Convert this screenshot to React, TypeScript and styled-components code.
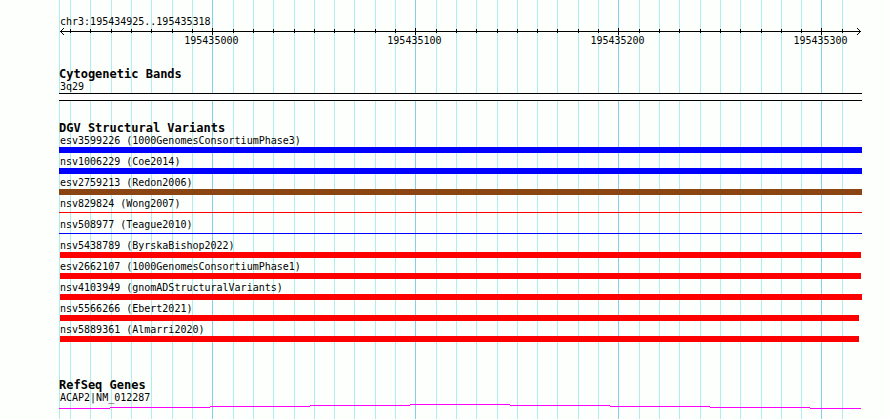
import * as React from "react";
import { FC } from "react";
import styled, { createGlobalStyle } from "styled-components";

const REGION_START = 195434925;
const REGION_END = 195435318;
const REGION_LENGTH = REGION_END - REGION_START + 1;

const GlobalStyle = createGlobalStyle`
  body {
    margin: 0;
    background: #fdfffc;
  }
`;

const Page = styled.main`
  display: flex;
  box-sizing: border-box;
  min-height: 100vh;
  padding: 0 28px 0 59px;
  color: #000;
  font-family: "DejaVu Sans Mono", monospace;
  font-size: 10px;
  line-height: 12px;
`;

const Panel = styled.div`
  position: relative;
  z-index: 0;
  flex: 1;
  min-width: 0;
  padding: 16px 0 10px;
`;

const Grid = styled.div`
  position: absolute;
  inset: 0;
  z-index: -1;
  box-shadow: inset 1px 0 #afeeee;
`;

const GridLine = styled.span<{ $major: boolean }>`
  position: absolute;
  top: 0;
  bottom: 0;
  width: 1px;
  background: ${({ $major }) => ($major ? "#87ceeb" : "#afeeee")};
`;

const Caption = styled.div`
  padding-left: 1px;
  white-space: nowrap;
`;

const Ruler = styled.div`
  position: relative;
  height: 19px;
  margin-bottom: 20px;
`;

const Axis = styled.div`
  display: flex;
  align-items: center;
  height: 7px;
  padding: 0 1px;
`;

const AxisLine = styled.span`
  flex: 1;
  height: 1px;
  margin: 0 -5px;
  background: #000;
`;

const ArrowHead = styled.svg`
  width: 5px;
  height: 7px;
  fill: #000;
  shape-rendering: crispEdges;
`;

const Tick = styled.span<{ $major: boolean }>`
  position: absolute;
  top: ${({ $major }) => ($major ? 0 : 1)}px;
  width: 1px;
  height: ${({ $major }) => ($major ? 7 : 4)}px;
  background: #000;
`;

const TickLabel = styled.span`
  position: absolute;
  top: 7px;
  margin-left: -28px;
`;

const Track = styled.section<{ $gap: number }>`
  margin-bottom: ${({ $gap }) => $gap}px;
`;

const Title = styled.h2`
  margin: 0;
  font-size: 12px;
  font-weight: bold;
  line-height: 14px;
  white-space: nowrap;
`;

const Band = styled.div`
  box-sizing: border-box;
  height: 8px;
  border: solid #000;
  border-width: 1px 0;
  background: #fff;
`;

const VariantList = styled.ul`
  display: flex;
  flex-direction: column;
  gap: 3px;
  margin: 0;
  padding: 0;
  list-style: none;
`;

const Lane = styled.div<{ $thin?: boolean; $start: number; $end: number }>`
  box-sizing: border-box;
  height: 6px;
  padding: ${({ $thin }) => ($thin ? 2 : 0)}px ${({ $end }) => $end}px 0
    ${({ $start }) => $start}px;
`;

const Bar = styled.div<{ $color: string; $thin?: boolean }>`
  height: ${({ $thin }) => ($thin ? 1 : 6)}px;
  background: ${({ $color }) => $color};
`;

const GenePlot = styled.svg`
  display: block;
  width: 100%;
  height: 5px;
  fill: #f0f;
`;

interface Variant {
  name: string;
  color: string;
  thin?: boolean;
  start?: number;
  end?: number;
}

const variants: Variant[] = [
  { name: "esv3599226 (1000GenomesConsortiumPhase3)", color: "#00f" },
  { name: "nsv1006229 (Coe2014)", color: "#00f" },
  { name: "esv2759213 (Redon2006)", color: "#8b4513" },
  { name: "nsv829824 (Wong2007)", color: "#f00", thin: true },
  { name: "nsv508977 (Teague2010)", color: "#00f", thin: true },
  { name: "nsv5438789 (ByrskaBishop2022)", color: "#f00", start: 1, end: 1 },
  { name: "esv2662107 (1000GenomesConsortiumPhase1)", color: "#f00", start: 1, end: 1 },
  { name: "nsv4103949 (gnomADStructuralVariants)", color: "#f00", start: 1 },
  { name: "nsv5566266 (Ebert2021)", color: "#f00", start: 1, end: 3 },
  { name: "nsv5889361 (Almarri2020)", color: "#f00", start: 1, end: 3 },
];

const ticks: number[] = [];
for (let pos = Math.ceil(REGION_START / 10) * 10; pos <= REGION_END; pos += 10) {
  ticks.push(pos);
}

const isMajor = (pos: number) => pos % 100 === 0;

// the drawn region leaves 1px before the first base and 2px after the last
const place = (pos: number) => ({
  left: `calc(1px + (100% - 3px) * ${(pos - REGION_START) / REGION_LENGTH})`,
});

const VariantRow: FC<Variant> = ({ name, color, thin, start = 0, end = 0 }) => (
  <li>
    <Caption>{name}</Caption>
    <Lane $thin={thin} $start={start} $end={end}>
      <Bar $color={color} $thin={thin} />
    </Lane>
  </li>
);

const App: FC = () => (
  <Page>
    <GlobalStyle />
    <Panel>
      <Grid aria-hidden="true">
        {ticks.map((pos) => (
          <GridLine key={pos} $major={isMajor(pos)} style={place(pos)} />
        ))}
      </Grid>
      <Caption>
        chr3:{REGION_START}..{REGION_END}
      </Caption>
      <Ruler>
        <Axis>
          <ArrowHead viewBox="0 0 5 7">
            <path d="M0 3h1v1H0zM1 2h1v1H1zM1 4h1v1H1zM2 1h1v1H2zM2 5h1v1H2zM3 0h1v1H3zM3 6h1v1H3z" />
          </ArrowHead>
          <AxisLine />
          <ArrowHead viewBox="0 0 5 7">
            <path d="M4 3h1v1H4zM3 2h1v1H3zM3 4h1v1H3zM2 1h1v1H2zM2 5h1v1H2zM1 0h1v1H1zM1 6h1v1H1z" />
          </ArrowHead>
        </Axis>
        {ticks.map((pos) => (
          <Tick key={pos} $major={isMajor(pos)} style={place(pos)} />
        ))}
        {ticks.filter(isMajor).map((pos) => (
          <TickLabel key={pos} style={place(pos)}>
            {pos}
          </TickLabel>
        ))}
      </Ruler>
      <Track $gap={20}>
        <Title>Cytogenetic Bands</Title>
        <Caption>3q29</Caption>
        <Band />
      </Track>
      <Track $gap={36}>
        <Title>DGV Structural Variants</Title>
        <VariantList>
          {variants.map((variant) => (
            <VariantRow key={variant.name} {...variant} />
          ))}
        </VariantList>
      </Track>
      <Track $gap={0}>
        <Title>RefSeq Genes</Title>
        <Caption>ACAP2|NM_012287</Caption>
        <GenePlot viewBox="0 0 803 5" preserveAspectRatio="none" shapeRendering="crispEdges">
          <path d="M0 4h51v1H0zM51 3h100v1H51zM151 2h100v1H151zM251 1h100v1H251zM351 0h100v1H351zM451 1h100v1H451zM551 2h100v1H551zM651 3h100v1H651zM751 4h51v1H751z" />
        </GenePlot>
      </Track>
    </Panel>
  </Page>
);

export default App;
